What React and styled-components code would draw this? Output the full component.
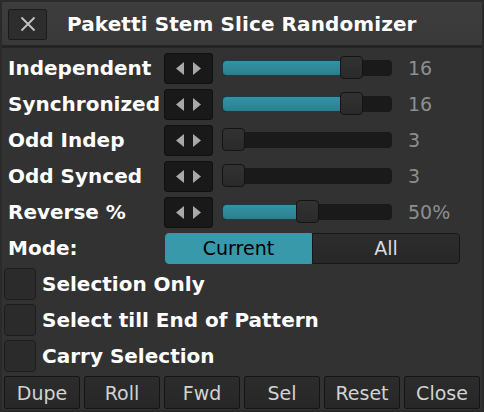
import React, { useState } from "react";
import styled, { createGlobalStyle } from "styled-components";

const GlobalStyle = createGlobalStyle`
  html, body {
    margin: 0;
    padding: 0;
    background: #2b2b2b;
  }
  body {
    font-family: "DejaVu Sans", "Liberation Sans", sans-serif;
  }
`;

const Window = styled.div`
  width: 484px;
  height: 412px;
  box-sizing: border-box;
  padding: 2px;
  background: #2a2a2a;
  display: flex;
  flex-direction: column;
`;

const TitleBar = styled.div`
  height: 46px;
  flex-shrink: 0;
  box-sizing: border-box;
  padding-top: 1px;
  background: linear-gradient(#3d3d3d, #393939);
  display: flex;
  align-items: center;
  padding-left: 6px;
  gap: 20px;
  border-bottom: 3px solid #242424;
`;

const CloseBox = styled.div`
  width: 39px;
  height: 31px;
  box-sizing: border-box;
  background: #2d2d2d;
  border: 1px solid #1b1b1b;
  border-radius: 2px;
  display: flex;
  align-items: center;
  justify-content: center;
`;

const Title = styled.div`
  color: #ffffff;
  font-weight: bold;
  font-size: 20px;
  letter-spacing: 0.1px;
`;

const Content = styled.div`
  flex: 1;
  background: #323232;
  padding: 4px 2px 0 2px;
  display: flex;
  flex-direction: column;
  gap: 4px;
`;

const Row = styled.div`
  height: 32px;
  display: flex;
  align-items: center;
`;

const Label = styled.div`
  width: 160px;
  box-sizing: border-box;
  padding-left: 4px;
  flex-shrink: 0;
  color: #ffffff;
  font-weight: bold;
  font-size: 20px;
  white-space: nowrap;
`;

const Stepper = styled.div`
  width: 49px;
  height: 31px;
  box-sizing: border-box;
  background: #191919;
  border: 1px solid #101010;
  border-radius: 3px;
  display: flex;
  align-items: center;
  justify-content: center;
  gap: 9px;
`;

const Track = styled.div`
  position: relative;
  margin-left: 9px;
  width: 170px;
  height: 16px;
  background: #1a1a1a;
  border-radius: 4px;
`;

const Fill = styled.div`
  height: 100%;
  box-sizing: border-box;
  border: 1px solid #143f47;
  border-radius: 4px;
  background: linear-gradient(#3393a4, #2a7f8e);
`;

const Thumb = styled.div`
  position: absolute;
  top: -4px;
  width: 23px;
  height: 23px;
  box-sizing: border-box;
  background: linear-gradient(#323232, #2a2a2a);
  border: 1px solid #141414;
  border-radius: 4px;
`;

const Value = styled.div`
  margin-left: 16px;
  color: #8e8e8e;
  font-size: 19px;
`;

const Segmented = styled.div`
  margin-left: 1px;
  width: 295px;
  height: 31px;
  display: flex;
`;

const Segment = styled.div`
  flex: ${(p) => (p.$active ? "0 0 147px" : "1")};
  box-sizing: border-box;
  display: flex;
  align-items: center;
  justify-content: center;
  font-size: 19px;
  color: ${(p) => (p.$active ? "#000000" : "#dcdcdc")};
  background: ${(p) => (p.$active ? "#3899ab" : "linear-gradient(#2d2d2d, #272727)")};
  border: 1px solid ${(p) => (p.$active ? "#3899ab" : "#161616")};
  border-radius: ${(p) => (p.$active ? "4px 0 0 4px" : "0 4px 4px 0")};
`;

const CheckRow = styled.label`
  height: 32px;
  display: flex;
  align-items: center;
  gap: 6px;
  cursor: pointer;
`;

const CheckBox = styled.div`
  width: 32px;
  height: 32px;
  box-sizing: border-box;
  background: #2b2b2b;
  border: 1px solid #1c1c1c;
  border-radius: 4px;
`;

const CheckText = styled.span`
  color: #ffffff;
  font-weight: bold;
  font-size: 20px;
`;

const ButtonBar = styled.div`
  display: flex;
  gap: 4px;
`;

const Button = styled.button`
  width: 76px;
  height: 33px;
  box-sizing: border-box;
  background: linear-gradient(#2c2c2c, #272727);
  border: 1px solid #151515;
  border-radius: 2px;
  color: #d2d2d2;
  font-family: "DejaVu Sans", sans-serif;
  font-size: 19px;
  padding: 0;
`;

const Arrow = ({ dir }) => (
  <svg width="8" height="13" viewBox="0 0 8 13">
    {dir === "left" ? (
      <polygon points="8,0 8,13 0,6.5" fill="#a9a9a9" />
    ) : (
      <polygon points="0,0 0,13 8,6.5" fill="#a9a9a9" />
    )}
  </svg>
);

const sliders = [
  { label: "Independent", frac: 0.8, value: "16" },
  { label: "Synchronized", frac: 0.8, value: "16" },
  { label: "Odd Indep", frac: 0, value: "3" },
  { label: "Odd Synced", frac: 0, value: "3" },
  { label: "Reverse %", frac: 0.5, value: "50%" },
];

const options = ["Selection Only", "Select till End of Pattern", "Carry Selection"];
const buttons = ["Dupe", "Roll", "Fwd", "Sel", "Reset", "Close"];

export default function App() {
  const [mode, setMode] = useState("Current");

  return (
    <Window>
      <GlobalStyle />
      <TitleBar>
        <CloseBox>
          <svg width="16" height="16" viewBox="0 0 16 16">
            <path d="M1.5 1.5 L14.5 14.5 M14.5 1.5 L1.5 14.5" stroke="#c4c4c4" strokeWidth="1.8" />
          </svg>
        </CloseBox>
        <Title>Paketti Stem Slice Randomizer</Title>
      </TitleBar>
      <Content>
        {sliders.map((s) => {
          const left = Math.round(s.frac * (170 - 23));
          return (
            <Row key={s.label}>
              <Label>{s.label}</Label>
              <Stepper>
                <Arrow dir="left" />
                <Arrow dir="right" />
              </Stepper>
              <Track>
                {s.frac > 0 && <Fill style={{ width: left + 4 }} />}
                <Thumb style={{ left }} />
              </Track>
              <Value>{s.value}</Value>
            </Row>
          );
        })}
        <Row>
          <Label>Mode:</Label>
          <Segmented>
            {["Current", "All"].map((m) => (
              <Segment key={m} $active={mode === m} onClick={() => setMode(m)}>
                {m}
              </Segment>
            ))}
          </Segmented>
        </Row>
        {options.map((o) => (
          <CheckRow key={o}>
            <CheckBox />
            <CheckText>{o}</CheckText>
          </CheckRow>
        ))}
        <ButtonBar>
          {buttons.map((b) => (
            <Button key={b}>{b}</Button>
          ))}
        </ButtonBar>
      </Content>
    </Window>
  );
}
